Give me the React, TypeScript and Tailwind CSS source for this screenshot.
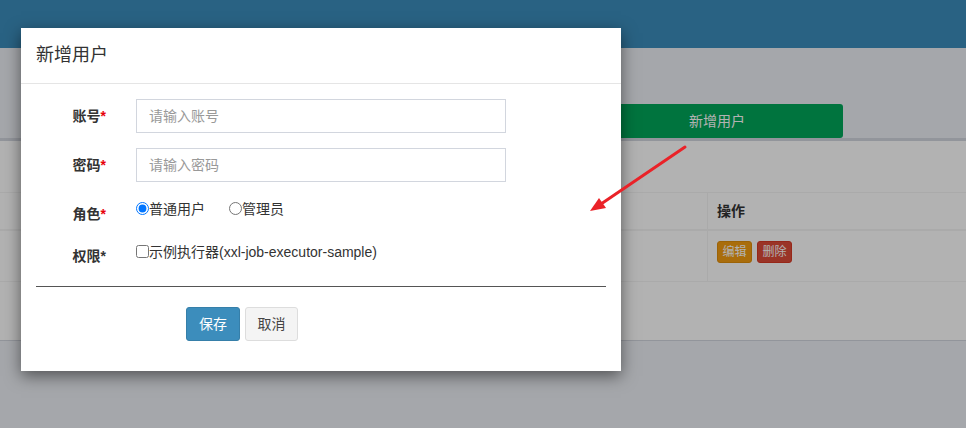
export default function App() {
  return (
    <div className="relative w-[966px] h-[428px] overflow-hidden font-['Liberation_Sans','Noto_Sans_CJK_SC',sans-serif] text-[14px] text-[#333]">
      {/* page under the dialog */}
      <div className="h-[48px] bg-[#3c8dbc]" />
      <div className="h-[380px] bg-[#ecf0f5]">
        <div className="pt-[56px] pl-[591px]">
          <div className="flex h-[34px] w-[252px] items-center justify-center rounded-[3px] bg-[#00a65a] text-white">
            新增用户
          </div>
        </div>
        <div className="h-[203px] border-t-[3px] border-b border-[#d2d6de] bg-white pt-[51px]">
          <div className="border-t border-[#f4f4f4]">
            <div className="grid h-[38px] grid-cols-[708px_1fr] border-b-2 border-[#f4f4f4]">
              <div className="border-r border-[#f4f4f4]" />
              <div className="flex items-center pl-[9px] font-bold">操作</div>
            </div>
            <div className="grid h-[51px] grid-cols-[708px_1fr] border-b border-[#f4f4f4]">
              <div className="border-r border-[#f4f4f4]" />
              <div className="flex gap-[5px] pl-[9px] pt-[10px]">
                <span className="flex h-[22px] w-[35px] items-center justify-center rounded-[3px] border border-[#e08e0b] bg-[#f39c12] text-[12px] text-white">编辑</span>
                <span className="flex h-[22px] w-[35px] items-center justify-center rounded-[3px] border border-[#d73925] bg-[#dd4b39] text-[12px] text-white">删除</span>
              </div>
            </div>
          </div>
        </div>
      </div>

      {/* backdrop */}
      <div className="absolute inset-0 bg-black/30" />

      {/* dialog */}
      <div className="absolute left-[21px] top-[28px] w-[600px] bg-white shadow-[0_5px_15px_rgba(0,0,0,0.5)]">
        <div className="h-[56px] border-b border-[#e5e5e5] px-[15px] pt-[14px] text-[18px] leading-[26px]">新增用户</div>
        <div className="px-[15px] pt-[15px] pb-[30px]">
          <div className="flex h-[34px]">
            <div className="w-[85px] pr-[15px] pt-[7px] text-right font-bold leading-[20px]">
              账号<span className="text-red-600">*</span>
            </div>
            <div className="pl-[15px]">
              <input
                className="h-[34px] w-[370px] border border-[#d2d6de] px-[12px] text-[14px] outline-none placeholder:text-[#999]"
                placeholder="请输入账号"
              />
            </div>
          </div>
          <div className="mt-[15px] flex h-[34px]">
            <div className="w-[85px] pr-[15px] pt-[7px] text-right font-bold leading-[20px]">
              密码<span className="text-red-600">*</span>
            </div>
            <div className="pl-[15px]">
              <input
                className="h-[34px] w-[370px] border border-[#d2d6de] px-[12px] text-[14px] outline-none placeholder:text-[#999]"
                placeholder="请输入密码"
              />
            </div>
          </div>
          <div className="mt-[15px] flex h-[27px]">
            <div className="w-[85px] pr-[15px] pt-[7px] text-right font-bold leading-[20px]">
              角色<span className="text-red-600">*</span>
            </div>
            <div className="flex items-center pl-[15px] pt-[1px] h-[22px] leading-[20px]">
              <label className="flex items-center">
                <input type="radio" name="role" defaultChecked className="m-0 h-[13px] w-[13px]" />
                <span>普通用户</span>
              </label>
              <label className="ml-[24px] flex items-center">
                <input type="radio" name="role" className="m-0 h-[13px] w-[13px]" />
                <span>管理员</span>
              </label>
            </div>
          </div>
          <div className="mt-[15px] flex h-[27px]">
            <div className="w-[85px] pr-[15px] pt-[7px] text-right font-bold leading-[20px]">权限*</div>
            <div className="flex h-[24px] items-center pl-[15px] pt-[1px] leading-[20px]">
              <label className="flex items-center">
                <input type="checkbox" className="m-0 h-[13px] w-[13px]" />
                <span>示例执行器(xxl-job-executor-sample)</span>
              </label>
            </div>
          </div>
          <div className="mt-[20px] border-t border-[#555]" />
          <div className="mt-[20px] flex gap-[5px] pl-[150px]">
            <button className="h-[34px] w-[54px] rounded-[3px] border border-[#367fa9] bg-[#3c8dbc] text-white">保存</button>
            <button className="h-[34px] w-[53px] rounded-[3px] border border-[#ddd] bg-[#f4f4f4] text-[#444]">取消</button>
          </div>
        </div>
      </div>

      {/* annotation arrow */}
      <svg className="pointer-events-none absolute inset-0" width="966" height="428" viewBox="0 0 966 428">
        <line x1="685" y1="147" x2="601" y2="204" stroke="#ea2228" strokeWidth="3" strokeLinecap="round" />
        <polygon points="590,211 606,208 599,198" fill="#ea2228" />
      </svg>
    </div>
  );
}
